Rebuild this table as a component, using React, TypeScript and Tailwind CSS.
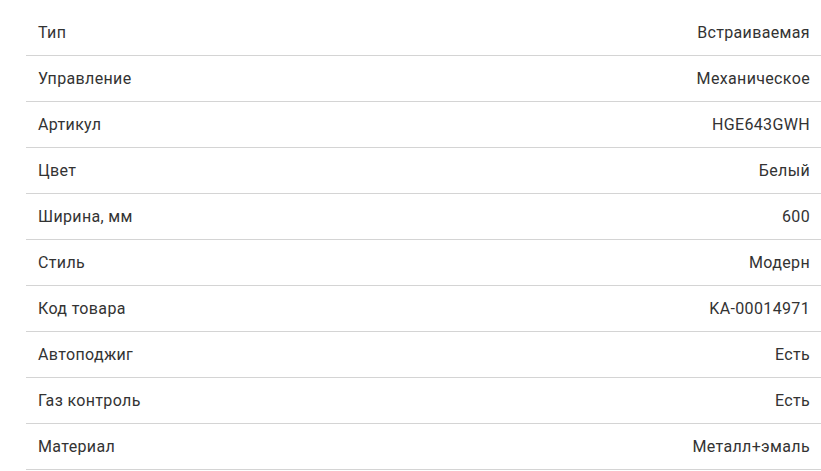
const specs = [
  ['Тип', 'Встраиваемая'],
  ['Управление', 'Механическое'],
  ['Артикул', 'HGE643GWH'],
  ['Цвет', 'Белый'],
  ['Ширина, мм', '600'],
  ['Стиль', 'Модерн'],
  ['Код товара', 'KA-00014971'],
  ['Автоподжиг', 'Есть'],
  ['Газ контроль', 'Есть'],
  ['Материал', 'Металл+эмаль'],
]

export default function App() {
  return (
    <div className="bg-white min-h-screen pt-[10px] pl-[26px] font-['Roboto',sans-serif] text-[16px] tracking-[0.35px] text-[#333]">
      {specs.map(([name, value]) => (
        <div
          key={name}
          className="flex items-center justify-between h-[46px] pl-[12px] pr-[11px] border-b border-[#d4d4d4]"
        >
          <span>{name}</span>
          <span>{value}</span>
        </div>
      ))}
    </div>
  )
}
